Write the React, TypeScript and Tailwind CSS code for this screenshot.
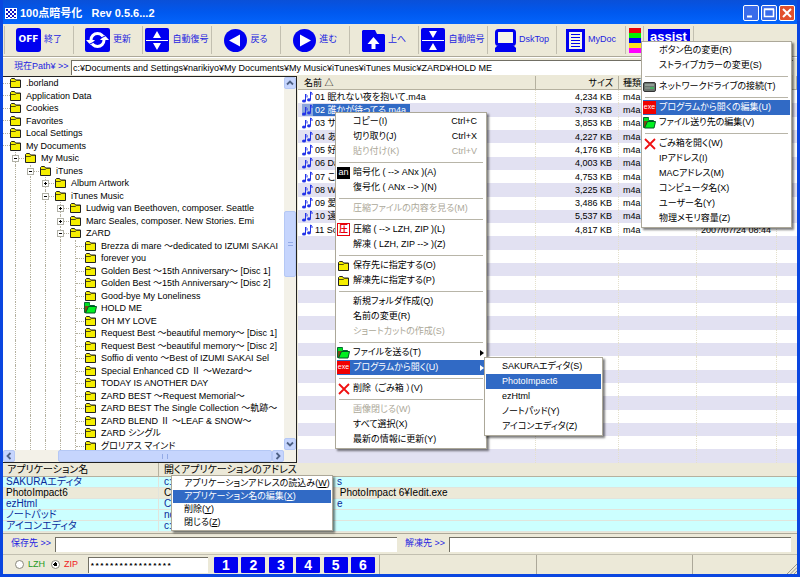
import type { ReactNode } from "react";

type MenuEntry = {
  label?: string;
  hint?: string;
  icon?: ReactNode;
  disabled?: boolean;
  active?: boolean;
  arrow?: boolean;
};

// an empty entry is a separator
const SEP: MenuEntry = {};

function Folder() {
  return (
    <svg width="11" height="10" viewBox="0 0 11 10" className="shrink-0">
      <path d="M.5 9.5v-8l1-1h3l1 1.5h5v7.5z" fill="#f5ee00" stroke="#222" />
      <path d="M1 3.5h4.5l1-1H10" fill="none" stroke="#55500a" />
    </svg>
  );
}

function OpenFolder() {
  return (
    <svg width="13" height="12" viewBox="0 0 13 12" className="shrink-0">
      <path d="M.5 10.5V.5h5v3h5v7z" fill="#7a4a10" stroke="#063" />
      <path d="M1 1h4.500v3H1z" fill="#00e020" />
      <path d="M1.500 11l3-6.500h8l-1.500 6.500z" fill="#00f020" stroke="#052" />
    </svg>
  );
}

function Cross() {
  return (
    <svg width="12" height="12" viewBox="0 0 12 12">
      <path d="M1 1l10 10M11 1L1 11" stroke="#f01010" strokeWidth="1.800" />
    </svg>
  );
}

function Drive() {
  return (
    <svg width="13" height="10" viewBox="0 0 13 10">
      <rect x=".5" y=".5" width="12" height="9" rx="1.500" fill="#6a746e" stroke="#333" />
      <path d="M2 3h9" stroke="#b8c4bc" />
      <path d="M2 6h5" stroke="#98a49c" />
      <path d="M7 6h4" stroke="#2e5" />
    </svg>
  );
}

function Note() {
  return (
    <svg width="11" height="12" viewBox="0 0 11 12" className="shrink-0">
      <path d="M3.500 10V3l1.500 1.500v2M8.500 8.500V1l1.500 1v2" fill="none" stroke="#2233e8" />
      <ellipse cx="2" cy="10" rx="2" ry="1.600" fill="#2233e8" />
      <ellipse cx="7" cy="8.800" rx="2" ry="1.600" fill="#2233e8" />
    </svg>
  );
}

const Exe = () => <span className="flex h-[13px] w-[13px] items-center justify-center bg-[#f00000] text-[7px] text-white">exe</span>;
const An = () => <span className="flex h-[12px] w-[13px] items-center justify-center bg-black text-[9px] text-white">an</span>;
const Zip = () => (
  <span className="flex h-[13px] w-[13px] items-center justify-center border border-red-600 bg-white text-[9px] font-bold text-red-600">圧</span>
);

const fileMenu: MenuEntry[] = [
  { label: "コピー(I)", hint: "Ctrl+C" },
  { label: "切り取り(J)", hint: "Ctrl+X" },
  { label: "貼り付け(K)", hint: "Ctrl+V", disabled: true },
  SEP,
  { label: "暗号化 ( --> ANx )(A)", icon: <An /> },
  { label: "復号化 ( ANx --> )(N)" },
  SEP,
  { label: "圧縮ファイルの内容を見る(M)", disabled: true },
  SEP,
  { label: "圧縮 ( --> LZH, ZIP )(L)", icon: <Zip /> },
  { label: "解凍 ( LZH, ZIP --> )(Z)" },
  SEP,
  { label: "保存先に指定する(O)", icon: <Folder /> },
  { label: "解凍先に指定する(P)", icon: <Folder /> },
  SEP,
  { label: "新規フォルダ作成(Q)" },
  { label: "名前の変更(R)" },
  { label: "ショートカットの作成(S)", disabled: true },
  SEP,
  { label: "ファイルを送る(T)", icon: <OpenFolder />, arrow: true },
  { label: "プログラムから開く(U)", icon: <Exe />, arrow: true, active: true },
  SEP,
  { label: "削除 （ごみ箱 ）(V)", icon: <Cross /> },
  SEP,
  { label: "画像閉じる(W)", disabled: true },
  { label: "すべて選択(X)" },
  { label: "最新の情報に更新(Y)" },
];

const programMenu: MenuEntry[] = [
  { label: "SAKURAエディタ(S)" },
  { label: "PhotoImpact6", active: true },
  { label: "ezHtml" },
  { label: "ノートパッド(Y)" },
  { label: "アイコンエディタ(Z)" },
];

const assistMenu: MenuEntry[] = [
  { label: "ボタン色の変更(R)" },
  { label: "ストライプカラーの変更(S)" },
  SEP,
  { label: "ネットワークドライブの接続(T)", icon: <Drive /> },
  SEP,
  { label: "プログラムから開くの編集(U)", icon: <Exe />, active: true },
  { label: "ファイル送り先の編集(V)", icon: <OpenFolder /> },
  SEP,
  { label: "ごみ箱を開く(W)", icon: <Cross /> },
  { label: "IPアドレス(I)" },
  { label: "MACアドレス(M)" },
  { label: "コンピュータ名(X)" },
  { label: "ユーザー名(Y)" },
  { label: "物理メモリ容量(Z)" },
];

// underlined access key, as this menu shows them
const key = (text: string, letter: string) => ({ text, letter });
const appMenu = [
  key("アプリケーションアドレスの読込み", "W"),
  key("アプリケーション名の編集", "X"),
  key("削除", "Y"),
  key("閉じる", "Z"),
];

const tree: { level: number; name: string; box?: "+" | "-"; open?: boolean }[] = [
  { level: 0, name: ".borland" },
  { level: 0, name: "Application Data" },
  { level: 0, name: "Cookies" },
  { level: 0, name: "Favorites" },
  { level: 0, name: "Local Settings" },
  { level: 0, name: "My Documents" },
  { level: 1, name: "My Music", box: "-" },
  { level: 2, name: "iTunes", box: "-" },
  { level: 3, name: "Album Artwork", box: "+" },
  { level: 3, name: "iTunes Music", box: "-" },
  { level: 4, name: "Ludwig van Beethoven, composer. Seattle", box: "+" },
  { level: 4, name: "Marc Seales, composer. New Stories. Emi", box: "+" },
  { level: 4, name: "ZARD", box: "-" },
  { level: 5, name: "Brezza di mare ～dedicated to IZUMI SAKAI" },
  { level: 5, name: "forever you" },
  { level: 5, name: "Golden Best ～15th Anniversary～ [Disc 1]" },
  { level: 5, name: "Golden Best ～15th Anniversary～ [Disc 2]" },
  { level: 5, name: "Good-bye My Loneliness" },
  { level: 5, name: "HOLD ME", open: true },
  { level: 5, name: "OH MY LOVE" },
  { level: 5, name: "Request Best ～beautiful memory～ [Disc 1]" },
  { level: 5, name: "Request Best ～beautiful memory～ [Disc 2]" },
  { level: 5, name: "Soffio di vento ～Best of IZUMI SAKAI Sel" },
  { level: 5, name: "Special Enhanced CD Ⅱ ～Wezard～" },
  { level: 5, name: "TODAY IS ANOTHER DAY" },
  { level: 5, name: "ZARD BEST ～Request Memorial～" },
  { level: 5, name: "ZARD BEST The Single Collection ～軌跡～" },
  { level: 5, name: "ZARD BLEND Ⅱ ～LEAF & SNOW～" },
  { level: 5, name: "ZARD シングル" },
  { level: 5, name: "グロリアス マインド" },
];

const files = [
  { name: "01 眠れない夜を抱いて.m4a", size: "4,234 KB" },
  { name: "02 誰かが待ってる.m4a", size: "3,733 KB" },
  { name: "03 サ", size: "3,853 KB" },
  { name: "04 あ", size: "4,227 KB" },
  { name: "05 好", size: "4,176 KB" },
  { name: "06 Da", size: "4,003 KB" },
  { name: "07 こ", size: "4,753 KB" },
  { name: "08 W", size: "3,225 KB" },
  { name: "09 愛", size: "3,486 KB" },
  { name: "10 遠", size: "5,537 KB" },
  { name: "11 So", size: "4,817 KB", date: "2007/07/24 08:44" },
];
const ROWS = 28;

const apps = [
  { name: "SAKURAエディタ", drive: "c:", rest: "s" },
  { name: "PhotoImpact6", drive: "C:", rest: " PhotoImpact 6¥Iedit.exe", active: true },
  { name: "ezHtml", drive: "C:", rest: "e" },
  { name: "ノートパッド", drive: "no", rest: "" },
  { name: "アイコンエディタ", drive: "c:", rest: "" },
];

const menuFrame = "absolute border border-[#aca899] bg-white p-px text-[9px] text-black shadow-[2px_2px_2px_rgba(0,0,0,0.5)]";

function Menu({ items, place }: { items: MenuEntry[]; place: string }) {
  return (
    <div role="menu" className={`${menuFrame} ${place}`}>
      {items.map((it, i) =>
        it.label ? (
          <button
            key={i}
            role="menuitem"
            disabled={it.disabled}
            className={`flex h-[15px] w-full items-center text-left whitespace-nowrap ${
              it.active ? "bg-[#316ac5] text-white" : it.disabled ? "text-[#aca899]" : ""
            }`}
          >
            <span className="mr-[3px] flex w-[13px] shrink-0 items-center justify-center">{it.icon}</span>
            <span className="flex-1">{it.label}</span>
            {it.hint && <span className="pr-2">{it.hint}</span>}
            {it.arrow && (
              <svg width="4" height="6" viewBox="0 0 4 6" className="mr-px">
                <path d="M0 0l4 3-4 3z" fill="currentColor" />
              </svg>
            )}
          </button>
        ) : (
          <div key={i} className="flex h-[6px] items-center px-[2px]">
            <div className="h-px w-full bg-[#b8b5a8]" />
          </div>
        )
      )}
    </div>
  );
}

function AppMenu() {
  return (
    <div role="menu" className={`${menuFrame} top-[475px] left-[168px] w-[162px]`}>
      {appMenu.map((it) => (
        <button
          key={it.letter}
          role="menuitem"
          className={`block h-[13px] w-full pl-[11px] text-left leading-[13px] whitespace-nowrap ${it.letter === "X" ? "bg-[#316ac5] text-white" : ""}`}
        >
          {it.text}(<u>{it.letter}</u>)
        </button>
      ))}
    </div>
  );
}

function Tool({ icon, label }: { icon: ReactNode; label: string }) {
  return (
    <button className="flex w-[69px] shrink-0 items-center justify-center gap-[3px] border-r border-[#c2bfb0] text-[9px] whitespace-nowrap">
      {icon}
      {label}
    </button>
  );
}

const BLUE = "#0000f0";

function UpDown({ inward }: { inward?: boolean }) {
  return (
    <svg width="24" height="24" viewBox="0 0 24 24" className="shrink-0">
      <rect width="24" height="24" rx="2" fill={BLUE} />
      <path d="M1 12.500h22" stroke="#fff" />
      {inward ? (
        <path d="M8 3h8l-4 7zM8 22h8l-4-7z" fill="#fff" />
      ) : (
        <path d="M8 10h8l-4-7zM8 15h8l-4 7z" fill="#fff" />
      )}
    </svg>
  );
}

function Round({ back }: { back?: boolean }) {
  return (
    <svg width="23" height="23" viewBox="0 0 23 23" className="shrink-0">
      <circle cx="11.500" cy="11.500" r="11.500" fill={BLUE} />
      {back ? <path d="M16 5.500v12l-11-6z" fill="#fff" /> : <path d="M7 5.500v12l11-6z" fill="#fff" />}
    </svg>
  );
}

function Toolbar() {
  return (
    <div className="flex h-[33px] shrink-0 border-b border-[#aca899] py-[2px] text-[#2424e0]">
      <div className="w-[2px] border-r border-[#c2bfb0]" />
      <Tool
        label="終了"
        icon={
          <span className="flex h-6 w-[25px] items-center justify-center rounded-[3px] bg-[#0000f0] font-['DejaVu_Sans'] text-[9px] font-bold text-white">
            OFF
          </span>
        }
      />
      <Tool
        label="更新"
        icon={
          <svg width="25" height="24" viewBox="0 0 25 24">
            <rect width="25" height="24" rx="2" fill={BLUE} />
            <circle cx="12.500" cy="12" r="6.500" fill="none" stroke="#fff" strokeWidth="3" />
            <path d="M1 12h9l-4.500 5zM15 12h9l-4.500-5z" fill="#fff" />
            <path d="M4 16.500l5-2.500M16 10l5-2.500" stroke={BLUE} strokeWidth="1" />
          </svg>
        }
      />
      <Tool label="自動復号" icon={<UpDown />} />
      <Tool label="戻る" icon={<Round back />} />
      <Tool label="進む" icon={<Round />} />
      <Tool
        label="上へ"
        icon={
          <svg width="23" height="23" viewBox="0 0 23 23">
            <path d="M1 1h12l2 4h7l1 1v16l-1 1H1l-1-1V2z" fill={BLUE} />
            <path d="M11.500 8l6 7h-4v5h-4v-5h-4z" fill="#fff" />
          </svg>
        }
      />
      <Tool label="自動暗号" icon={<UpDown inward />} />
      <Tool
        label="DskTop"
        icon={
          <svg width="21" height="23" viewBox="0 0 21 23">
            <rect x="1.500" y="1.500" width="18" height="14" rx="2" fill="#f6f4ea" stroke={BLUE} strokeWidth="3" />
            <path d="M2 17h17l2 2v4H0v-4z" fill={BLUE} />
          </svg>
        }
      />
      <Tool
        label="MyDoc"
        icon={
          <svg width="19" height="23" viewBox="0 0 19 23">
            <rect x="1.500" y="1.500" width="16" height="20" fill="#f6f4ea" stroke={BLUE} strokeWidth="3" />
            <path d="M5 5.500h9M5 8.500h9M5 11.500h9M5 14.500h9M5 17.500h9" stroke={BLUE} />
          </svg>
        }
      />
      <button aria-label="Stripe colour" className="flex w-[18px] flex-col items-center justify-center border-r border-[#c2bfb0]">
        <span className="h-[5px] w-3 bg-red-600" />
        <span className="h-[5px] w-3 bg-[#00f000]" />
        <span className="h-[5px] w-3 bg-[#0000f0]" />
        <span className="h-[5px] w-3 bg-yellow-300" />
        <span className="h-[5px] w-3 bg-[#f0f]" />
      </button>
      <button className="flex w-[50px] items-start justify-center border-r border-[#c2bfb0] pt-[3px]">
        <span className="h-6 w-[42px] bg-[#0000f0] text-[13px] leading-4 font-bold text-white">assist</span>
      </button>
    </div>
  );
}

function ScrollButton({ d, label }: { d: string; label: string }) {
  return (
    <button aria-label={label} className="flex h-3 w-3 shrink-0 items-center justify-center rounded-[2px] border border-[#b5c8f5] bg-[#c6d5fd]">
      <svg width="8" height="8" viewBox="0 0 8 8">
        <path d={d} fill="none" stroke="#4d6185" strokeWidth="1.800" />
      </svg>
    </button>
  );
}

function TreeGuide({ box, joint }: { box?: "+" | "-"; joint?: boolean }) {
  return (
    <span className="relative h-full w-[15px] shrink-0 pl-[5px]">
      <span className="block h-full border-l border-dotted border-[#b4b09f]" />
      {joint && <span className="absolute top-[6px] left-[6px] w-2 border-t border-dotted border-[#b4b09f]" />}
      {box && (
        <svg width="7" height="7" viewBox="0 0 7 7" className="absolute top-[3px] left-[2px]">
          <rect x=".5" y=".5" width="6" height="6" fill="#fff" stroke="#b0b0a6" />
          <path d={box === "+" ? "M2 3.500h3M3.500 2v3" : "M2 3.500h3"} stroke="#000" />
        </svg>
      )}
    </span>
  );
}

function FolderTree() {
  return (
    <div className="flex w-[294px] shrink-0 flex-col border-t border-r border-b border-[#222] bg-white text-[9px]">
      <div className="flex min-h-0 flex-1">
        <div className="min-w-0 flex-1 overflow-hidden">
          <ul className="grid h-[375px] auto-rows-fr">
            {tree.map((n, i) => (
              <li key={i} className="flex min-h-0 items-center whitespace-nowrap">
                <span className={`w-[7px] shrink-0 ${n.level === 0 ? "border-t border-dotted border-[#b4b09f]" : ""}`} />
                {Array.from({ length: n.level }, (_, k) => (
                  <TreeGuide key={k} joint={k === n.level - 1} box={k === n.level - 1 ? n.box : undefined} />
                ))}
                <span className="mr-[5px] flex w-[11px] shrink-0 justify-center">{n.open ? <OpenFolder /> : <Folder />}</span>
                <span className="leading-3">{n.name}</span>
              </li>
            ))}
          </ul>
        </div>
        <div className="flex w-3 flex-col bg-[#f3f1e8]">
          <ScrollButton label="Up" d="M1 5.500l3-3 3 3" />
          <div className="h-[122px]" />
          <div className="flex h-[66px] flex-col items-center justify-center rounded-[2px] border border-[#b5c8f5] bg-[#c6d5fd]">
            <span className="h-[4px] w-[5px] border-y border-[#93aae6]" />
          </div>
          <div className="flex-1" />
          <ScrollButton label="Down" d="M1 2.500l3 3 3-3" />
        </div>
      </div>
      <div className="flex h-3 bg-[#f3f1e8] pr-3">
        <ScrollButton label="Left" d="M5.500 1l-3 3 3 3" />
        <div className="w-[43px]" />
        <div className="flex flex-1 items-center justify-center rounded-[2px] border border-[#b5c8f5] bg-[#c6d5fd]">
          <span className="h-[5px] w-[6px] border-x border-[#93aae6]" />
        </div>
        <ScrollButton label="Right" d="M2.500 1l3 3-3 3" />
      </div>
    </div>
  );
}

function FileList() {
  const cell = "border-r border-dotted border-[#e4e0cc] p-0";
  const head = "border-r border-b border-[#b5b19f] bg-[#ece9d8] p-0 font-normal";
  return (
    <div className="min-w-0 flex-1 overflow-hidden bg-white">
      <table className="h-full w-full table-fixed border-separate border-spacing-0 text-[9px] leading-3 whitespace-nowrap">
        <thead>
          <tr className="h-[14px]">
            <th className={`${head} pl-[6px] text-left`}>名前 △</th>
            <th className={`${head} w-[83px] pr-[5px] text-right`}>サイズ</th>
            <th className={`${head} w-[78px] pl-1 text-left`}>種類</th>
            <th className={`${head} w-[80px]`} />
            <th className={`${head} w-[20px]`} />
          </tr>
        </thead>
        <tbody>
          {Array.from({ length: ROWS }, (_, i) => {
            const f = files[i];
            return (
              <tr key={i} className={i % 2 ? "bg-[#e2e1f2]" : "bg-white"}>
                <td className={cell}>
                  {f ? (
                    <span className="flex h-3 items-center pl-1">
                      <span className={i === 1 ? "bg-[#316ac5]/50" : ""}>
                        <Note />
                      </span>
                      <span className={`pr-1 pl-[2px] ${i === 1 ? "bg-[#316ac5] text-white" : ""}`}>{f.name}</span>
                    </span>
                  ) : (
                    <span className="block h-3" />
                  )}
                </td>
                <td className={`${cell} pr-[6px] text-right`}>{f?.size}</td>
                <td className={`${cell} pl-1`}>{f && "m4a"}</td>
                <td className={`${cell} pl-1`}>{f?.date}</td>
                <td className="p-0" />
              </tr>
            );
          })}
        </tbody>
      </table>
    </div>
  );
}

function AppList() {
  return (
    <table className="w-full shrink-0 table-fixed border-separate border-spacing-0 border-b border-[#ece9d8] text-[10px] leading-[10px] whitespace-nowrap">
      <thead>
        <tr className="h-[14px] text-left">
          <th className="w-[156px] border-r border-b border-[#b5b19f] p-0 pl-1 font-normal">アプリケーション名</th>
          <th className="border-b border-[#b5b19f] p-0 pl-[5px] font-normal">開くアプリケーションのアドレス</th>
        </tr>
      </thead>
      <tbody>
        {apps.map((a) => (
          <tr key={a.name} className={`h-[11px] ${a.active ? "bg-[#ece9d8] text-black" : "bg-[#ccffff] text-[#0a2a9a]"}`}>
            <td className="border-r border-b border-[#e2e4dc] p-0 pl-[3px]">{a.name}</td>
            <td className="border-b border-[#e2e4dc] p-0 pl-[5px]">
              <span className="flex h-[10px]">
                <span className="w-[173px]">{a.drive}</span>
                <span className="whitespace-pre">{a.rest}</span>
              </span>
            </td>
          </tr>
        ))}
      </tbody>
    </table>
  );
}

const box = "border-t border-l border-[#716f64] bg-white px-px outline-none";
const captionButton = "h-4 w-4 rounded-[2px] border border-white";

export default function App() {
  return (
    <div
      className="relative flex h-screen min-h-[560px] flex-col overflow-hidden border-x-[3px] border-b-[3px] border-[#0a46e0] bg-[#ece9d8] text-black [font-feature-settings:'palt']"
      style={{ fontFamily: '"Liberation Sans", "Noto Sans CJK JP", sans-serif' }}
    >
      <header className="-mx-[3px] flex h-6 shrink-0 items-center bg-linear-to-b from-[#0a50d8] via-[#0058ee] to-[#0364fc] px-[5px] pt-[2px]">
        <svg width="12" height="11" viewBox="0 0 12 11" className="mr-[3px]">
          <rect width="12" height="11" fill="#fff" />
          <path
            d="M1 1h2v2H1zM5 1h2v2H5zM9 1h2v2H9zM3 3h2v2H3zM7 3h2v2H7zM1 5h2v2H1zM5 5h2v2H5zM9 5h2v2H9zM3 7h2v2H3zM7 7h2v2H7zM1 9h2v1H1zM5 9h2v1H5zM9 9h2v1H9z"
            fill="#1010c0"
          />
        </svg>
        <h1 className="flex-1 text-[11px] font-bold whitespace-pre text-white">100点暗号化   Rev 0.5.6...2</h1>
        <div className="flex gap-[2px]">
          <button aria-label="Minimize" className={`${captionButton} bg-[#3a6cea]`}>
            <svg width="14" height="14" viewBox="0 0 14 14">
              <path d="M3 10.500h5" stroke="#fff" strokeWidth="2" />
            </svg>
          </button>
          <button aria-label="Maximize" className={`${captionButton} bg-[#3a6cea]`}>
            <svg width="14" height="14" viewBox="0 0 14 14">
              <path d="M2.500 3.500h9v7h-9zM2 3h10" fill="none" stroke="#fff" strokeWidth="1.500" />
            </svg>
          </button>
          <button aria-label="Close" className={`${captionButton} bg-[#e2502c]`}>
            <svg width="14" height="14" viewBox="0 0 14 14">
              <path d="M3 3l8 8M11 3l-8 8" stroke="#fff" strokeWidth="2" />
            </svg>
          </button>
        </div>
      </header>

      <Toolbar />

      <div className="flex h-[19px] shrink-0 items-center border-t border-white pr-1 text-[9px]">
        <label htmlFor="path" className="w-[68px] pl-[11px] whitespace-nowrap text-[#2424e0]">
          現在Path¥ &gt;&gt;
        </label>
        <input
          id="path"
          readOnly
          className={`h-[15px] min-w-0 flex-1 ${box}`}
          value="c:¥Documents and Settings¥narikiyo¥My Documents¥My Music¥iTunes¥iTunes Music¥ZARD¥HOLD ME"
        />
      </div>

      <main className="flex min-h-0 flex-1 gap-px">
        <FolderTree />
        <FileList />
      </main>

      <AppList />

      <div className="flex h-[21px] shrink-0 items-center border-t border-[#aca899] pr-[6px] pl-2 text-[9px] text-[#2424e0]">
        <label htmlFor="save" className="w-11 whitespace-nowrap">
          保存先 &gt;&gt;
        </label>
        <input id="save" className={`h-[15px] min-w-0 flex-1 ${box}`} />
        <label htmlFor="extract" className="w-[52px] pl-2 whitespace-nowrap">
          解凍先 &gt;&gt;
        </label>
        <input id="extract" className={`h-[15px] min-w-0 flex-1 ${box}`} />
      </div>

      <footer className="flex h-5 shrink-0 items-center border-t border-[#c2bfb0] text-[9px]">
        <div className="flex w-[81px] items-center pl-3">
          <input id="lzh" type="radio" name="format" className="mr-1 h-[9px] w-[9px] appearance-none rounded-full border border-[#8a887c] bg-white" />
          <label htmlFor="lzh" className="mr-[6px] text-[#1e9a1e]">
            LZH
          </label>
          <input
            id="zip"
            type="radio"
            name="format"
            defaultChecked
            className="mr-1 h-[9px] w-[9px] appearance-none rounded-full border border-[#8a887c] bg-white checked:bg-[radial-gradient(#000_0_2px,#fff_2px)]"
          />
          <label htmlFor="zip" className="text-[#f02020]">
            ZIP
          </label>
        </div>
        <input
          aria-label="Password"
          readOnly
          value="*****************"
          className={`ml-1 h-4 w-[120px] font-['Liberation_Mono'] text-[8px] font-bold ${box}`}
        />
        <div className="ml-[6px] flex w-[161px] justify-between text-[14px] font-bold text-white">
          {[1, 2, 3, 4, 5, 6].map((n) => (
            <button key={n} className="h-4 w-6 rounded-[1px] bg-[#0000f0] leading-4">
              {n}
            </button>
          ))}
        </div>
        <div className="ml-1 flex h-full flex-1">
          <div className="flex-3 border-l border-[#aca899]" />
          <div className="flex-3 border-l border-[#aca899]" />
          <div className="flex flex-2 items-end justify-end border-l border-[#aca899]">
            <svg width="10" height="10" viewBox="0 0 10 10">
              <path d="M0 10L10 0M3.500 10L10 3.500M7 10l3-3" stroke="#9a978a" />
            </svg>
          </div>
        </div>
      </footer>

      <Menu items={assistMenu} place="left-[638px] top-[41px] w-[151px]" />
      <Menu items={fileMenu} place="left-[332px] top-[112px] w-[152px]" />
      <Menu items={programMenu} place="left-[481px] top-[357px] w-[119px]" />
      <AppMenu />
    </div>
  );
}
